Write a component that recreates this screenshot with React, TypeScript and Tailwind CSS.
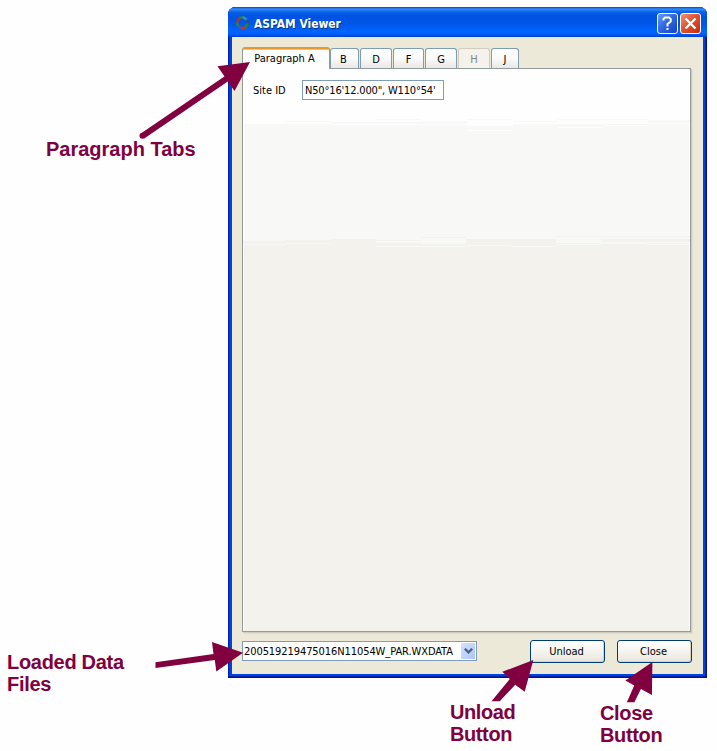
import React from "react";

const ui = "font-['DejaVu_Sans_Condensed','DejaVu_Sans',sans-serif] text-[11px] leading-[13px] whitespace-nowrap";

const tabs = [
  { name: "B", style: "ml-0 w-[29px] pr-[2px]" },
  { name: "D", style: "ml-px w-[32px]" },
  { name: "F", style: "ml-px w-[31px]" },
  { name: "G", style: "ml-px w-[32px]" },
  { name: "H", style: "ml-px w-[32px]", disabled: true },
  { name: "J", style: "ml-px w-[28px]" },
];

function AppIcon() {
  return (
    <svg width="15" height="16" viewBox="0 0 15 16" fill="none" strokeWidth="2.6" className="mt-[2px]">
      <path d="M4 3.2 8.5 2" stroke="#198c4c" />
      <path d="m8 2 4.2 3" stroke="#2f8fc0" />
      <path d="M12 4.5 13 9" stroke="#234b9b" />
      <path d="m13 8.5-3 4" stroke="#168b37" />
      <path d="m10.8 12.6-5 .7" stroke="#d42d23" />
      <path d="M6 13.4 2.8 10" stroke="#35609b" />
      <path d="M2.7 11 2 7" stroke="#1d8a4a" />
      <path d="m2 7.6 2.6-5" stroke="#a53440" />
    </svg>
  );
}

function TitleBar() {
  return (
    <header className="flex h-[30px] items-center rounded-t-[7px] bg-[linear-gradient(180deg,#0847bd_0%,#328df8_7%,#0864ef_16%,#0053df_28%,#0055e8_55%,#0065ff_82%,#005df8_91%,#003dcc_100%)] pl-[7px] pr-[6px]">
      <AppIcon />
      <h1 className="ml-[4px] mt-[4px] whitespace-nowrap font-['DejaVu_Sans_Condensed','DejaVu_Sans',sans-serif] text-[13px] font-bold leading-4 text-white [text-shadow:1px_1px_#063184]">
        <span className="inline-block origin-left scale-x-[0.915]">ASPAM Viewer</span>
      </h1>
      <div className="ml-auto mt-[3px] flex gap-[2px]">
        <button aria-label="Help" className="flex h-[21px] w-[21px] items-center justify-center rounded-[3px] border border-white bg-[linear-gradient(135deg,#6b9cf5,#3268e3_45%,#1543c4)]">
          <svg width="19" height="19" viewBox="0 0 19 19" fill="none" stroke="white" strokeWidth="2">
            <path d="M5.5 6.5V5L7 3.5h4L12.7 5v2.5L9.5 10v2.5M9.5 14v2" />
          </svg>
        </button>
        <button aria-label="Close window" className="flex h-[21px] w-[21px] items-center justify-center rounded-[3px] border border-white bg-[linear-gradient(135deg,#f09279,#e25230_45%,#c62c08)]">
          <svg width="19" height="19" viewBox="0 0 19 19" stroke="white" strokeWidth="2.3">
            <path d="m4.5 4.5 10 10m0-10-10 10" />
          </svg>
        </button>
      </div>
    </header>
  );
}

function TabBar() {
  return (
    <div className={`flex h-[21px] items-end ${ui}`}>
      <button className="relative z-10 -mb-px flex h-[22px] w-[88px] justify-center rounded-t-[3px] border-x border-t-2 border-x-[#919b9c] border-t-[#e9982c] bg-[#fefefe] pr-[3px] pt-[3px] shadow-[inset_0_1px_#ffc73c]">
        <span>Paragraph A</span>
      </button>
      {tabs.map((tab) => (
        <button
          key={tab.name}
          className={`flex h-[20px] items-center justify-center rounded-t-[3px] border-x border-t pt-px ${tab.style} ${
            tab.disabled
              ? "border-[#d1ccbb] bg-[#f4f2ea] text-[#85847c]"
              : "border-[#809caf] bg-gradient-to-b from-white via-[#fafafa] to-[#eae8e5]"
          }`}
        >
          {tab.name}
        </button>
      ))}
    </div>
  );
}

/* Stepped edges between the three flat tones of the page background. */
function ToneSteps() {
  return (
    <svg className="pointer-events-none absolute left-0 top-0" width="447" height="200" shapeRendering="crispEdges">
      <path fill="#f8f8f6" d="M43 52h45v1H43zM88 53h90v2H88zM133 50h45v1h-45zM178 52h46v3h-46zM224 50h46v1h-46zM270 52h45v1h-45zM315 50h90v1h-90zM270 51h0zM405 51h42v3h-42z" />
      <path fill="#fefefe" d="M0 54h43v1H0zM88 55h136v1H88zM224 54h46v3h-46zM224 61h46v1h-46zM270 54h45v1h-45zM315 58h45v1h-45zM360 56h45v1h-45z" />
      <path fill="#f3f2ed" d="M0 172h43v2H0zM43 171h45v3H43zM88 170h45v4H88zM133 171h45v1h-45zM178 168h45v1h-45zM223 170h90v4h-90zM313 167h134v1H313zM358 170h89v3h-89z" />
      <path fill="#f8f8f6" d="M0 175h43v1H0zM43 174h45v1H43zM133 177h90v1h-90zM178 174h45v1h-45zM223 176h45v1h-45zM268 177h45v1h-45zM313 175h45v1h-45zM358 174h45v1h-45zM403 175h44v1h-44z" />
    </svg>
  );
}

function XpButton({ label }: { label: string }) {
  return (
    <button className={`flex h-[23px] w-[75px] items-center justify-center rounded-[3px] border border-[#003c74] bg-gradient-to-b from-white via-[#f5f4ef] to-[#e8e5da] pr-[2px] shadow-[inset_-1px_-1px_#d6d0c5] ${ui}`}>
      {label}
    </button>
  );
}

function ViewerWindow() {
  return (
    <main className="flex h-[671px] w-[479px] flex-col rounded-t-[8px] bg-[#0045db] shadow-[inset_-1px_-1px_#00138c,inset_1px_0_#0020b6,inset_-2px_-2px_#001fa5,inset_2px_0_#0831d9]">
      <TitleBar />
      <div className="mx-[4px] mb-[4px] flex flex-1 flex-col bg-[#ece9d8] px-[10px] pt-[10px]">
        <TabBar />
        <section className="relative h-[564px] w-[449px] border border-[#919b9c] bg-[linear-gradient(180deg,#fefefe_0_55px,#f8f8f6_55px_174px,#f3f2ed_174px)] pl-[10px] pt-[11px] shadow-[1px_1px_#d0cebf,2px_2px_#e1decf,inset_1px_0_#fefefe,inset_-1px_0_#fefefe]">
          <ToneSteps />
          <div className={`flex items-center ${ui}`}>
            <label className="w-[49px]">Site ID</label>
            <div className="flex h-[20px] w-[142px] items-center border border-[#7f9db9] bg-white pl-[2px]">
              <span className="tracking-[-0.17px]">N50°16'12.000", W110°54'</span>
            </div>
          </div>
        </section>
        <div className="flex pt-[8px]">
          <div className={`mt-px flex h-[20px] w-[235px] items-center border border-[#7f9db9] bg-white pl-[1px] ${ui}`}>
            <span className="tracking-[-0.08px]">200519219475016N11054W_PAR.WXDATA</span>
            <span className="ml-auto mr-px flex h-[16px] w-[14px] items-center justify-center rounded-[1px] bg-gradient-to-br from-[#d5e2ff] to-[#adc5f5]">
              <svg width="9" height="6" viewBox="0 0 9 6" fill="none" stroke="#4d6185" strokeWidth="2.2"><path d="m.8.7 3.7 3.7L8.2.7" /></svg>
            </span>
          </div>
          <div className="ml-[53px] flex gap-[12px]">
            <XpButton label="Unload" />
            <XpButton label="Close" />
          </div>
        </div>
      </div>
    </main>
  );
}

function Callout({ place, children }: { place: string; children: React.ReactNode }) {
  return (
    <div className={`absolute whitespace-nowrap font-['Liberation_Sans',Arial,sans-serif] text-[20px] font-bold leading-[22px] text-[#800040] ${place}`}>
      {children}
    </div>
  );
}

export default function App() {
  return (
    <div className="relative h-[751px] w-[717px] overflow-hidden bg-[#fefefe] pl-[228px] pt-[7px] text-black">
      <ViewerWindow />
      <svg className="pointer-events-none absolute left-0 top-0 z-20" width="717" height="751" viewBox="0 0 717 751" fill="#800040">
        <path d="M142.5 136 229 77" stroke="#800040" strokeWidth="6" />
        <circle cx="142.5" cy="135.7" r="3" />
        <path d="m250 62-32.5 4.3 17 24.7Z" />
        <path d="M155.5 662.3 213.5 654 212 642l31 10.7-26.7 18.8-1.5-11.5-59.3 8Z" />
        <path d="m533.3 660-31 11.8 7.5 7.2-18.3 22.3h8.2l15.5-16.6 9.5 7.1Z" />
        <path d="m652.4 662-27 18.6 8.8 4.8-7.3 16.8h7.5l6.5-13.3 11 6.1Z" />
      </svg>
      <Callout place="left-[46px] top-[138px]">Paragraph Tabs</Callout>
      <Callout place="left-[7px] top-[651px] tracking-[-0.3px]">Loaded Data<br />Files</Callout>
      <Callout place="left-[450px] top-[701px] tracking-[-0.4px]">Unload<br />Button</Callout>
      <Callout place="left-[600px] top-[702px] tracking-[-0.35px]">Close<br />Button</Callout>
    </div>
  );
}
